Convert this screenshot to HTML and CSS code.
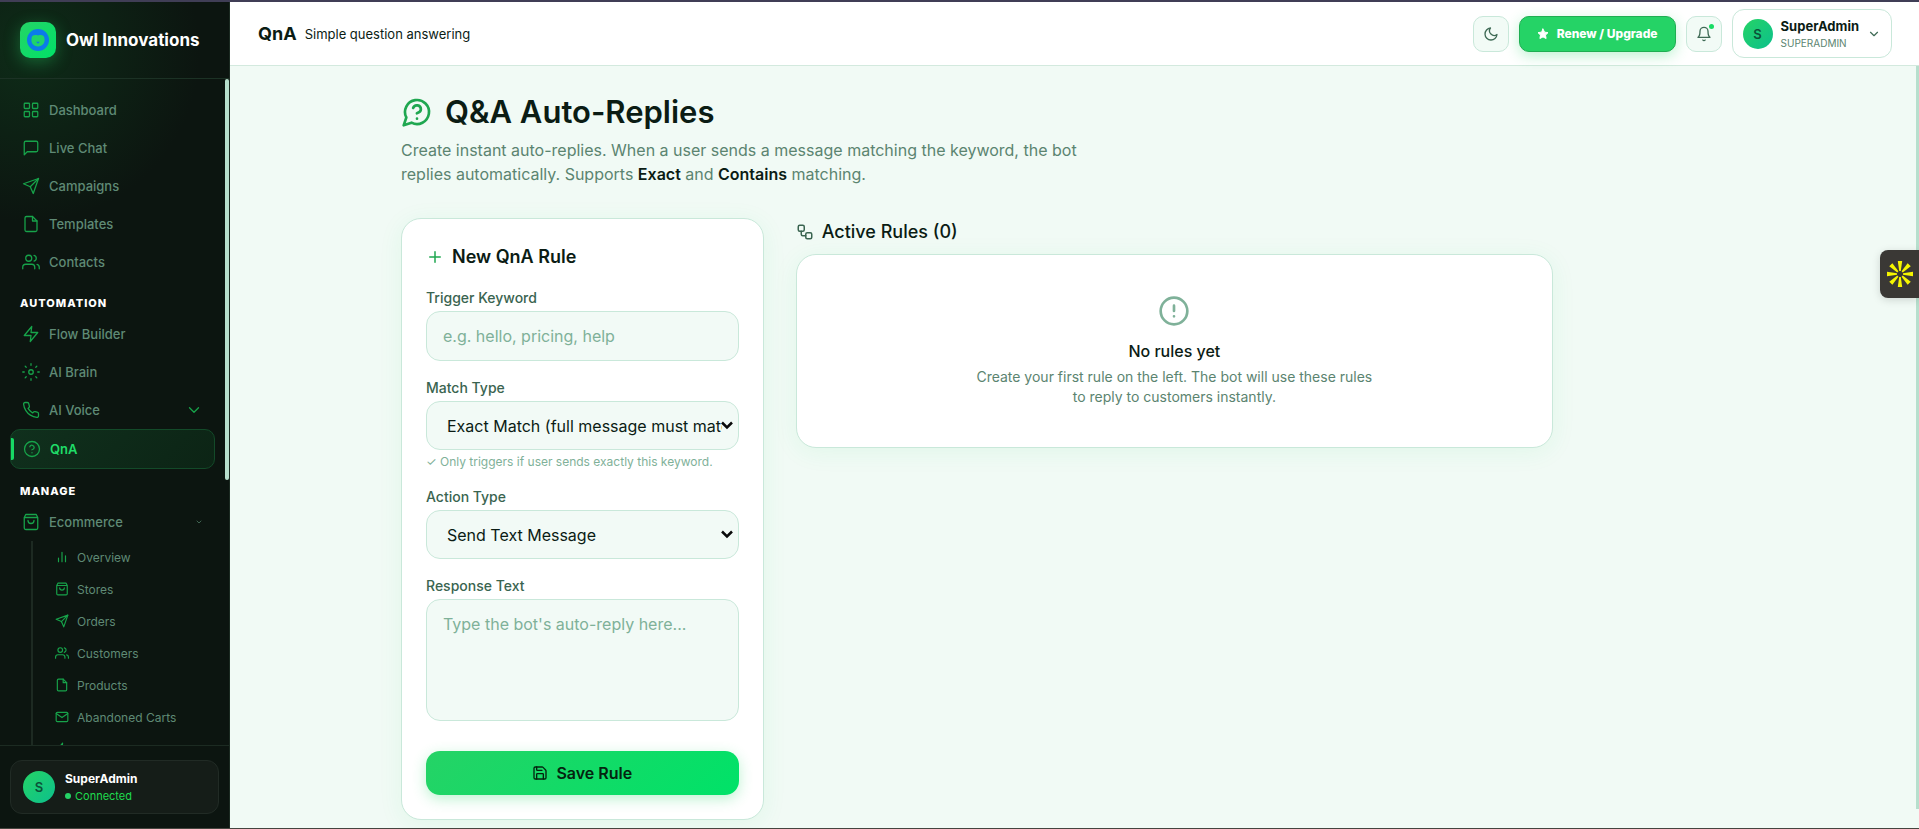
FILE: index.html
```
<!DOCTYPE html>
<html lang="en">
<head>
  <meta charset="UTF-8" />
  <meta name="viewport" content="width=device-width, initial-scale=1.0"/>
  <title>QnA - Owl Innovations</title>
  <link rel="stylesheet" href="styles.css">
</head>
<body>
  <!-- Icon set -->
  <svg class="sprite" aria-hidden="true">
    <symbol id="i-grid" viewBox="0 0 24 24"><rect x="3" y="3" width="7" height="7" rx="1"/><rect x="14" y="3" width="7" height="7" rx="1"/><rect x="14" y="14" width="7" height="7" rx="1"/><rect x="3" y="14" width="7" height="7" rx="1"/></symbol>
    <symbol id="i-chat" viewBox="0 0 24 24"><path d="M21 15a2 2 0 0 1-2 2H7l-4 4V5a2 2 0 0 1 2-2h14a2 2 0 0 1 2 2z"/></symbol>
    <symbol id="i-send" viewBox="0 0 24 24"><path d="M22 2 15 22l-4-9-9-4z"/><path d="M22 2 11 13"/></symbol>
    <symbol id="i-file" viewBox="0 0 24 24"><path d="M14 2H6a2 2 0 0 0-2 2v16a2 2 0 0 0 2 2h12a2 2 0 0 0 2-2V8z"/><path d="M14 2v6h6"/></symbol>
    <symbol id="i-users" viewBox="0 0 24 24"><path d="M17 21v-2a4 4 0 0 0-4-4H5a4 4 0 0 0-4 4v2"/><circle cx="9" cy="7" r="4"/><path d="M23 21v-2a4 4 0 0 0-3-3.87M16 3.13a4 4 0 0 1 0 7.75"/></symbol>
    <symbol id="i-bolt" viewBox="0 0 24 24"><path d="M13 2 3 14h9l-1 8 10-12h-9z"/></symbol>
    <symbol id="i-sun" viewBox="0 0 24 24"><circle cx="12" cy="12" r="3"/><path d="M12 1v2M12 21v2M4.200 4.200l1.400 1.400M18.400 18.400l1.400 1.400M1 12h2M21 12h2M4.200 19.800l1.400-1.400M18.400 5.600l1.400-1.400"/></symbol>
    <symbol id="i-phone" viewBox="0 0 24 24"><path d="M22 16.92v3a2 2 0 0 1-2.18 2 19.79 19.79 0 0 1-8.63-3.07 19.5 19.5 0 0 1-6-6 19.79 19.79 0 0 1-3.07-8.67A2 2 0 0 1 4.11 2h3a2 2 0 0 1 2 1.72c.13.96.36 1.9.7 2.81a2 2 0 0 1-.45 2.11L8.09 9.91a16 16 0 0 0 6 6l1.27-1.27a2 2 0 0 1 2.11-.45c.91.34 1.85.57 2.81.7A2 2 0 0 1 22 16.92z"/></symbol>
    <symbol id="i-help" viewBox="0 0 24 24"><circle cx="12" cy="12" r="10"/><path d="M9.09 9a3 3 0 0 1 5.83 1c0 2-3 3-3 3M12 17h.01"/></symbol>
    <symbol id="i-bag" viewBox="0 0 24 24"><path d="M5 2h14l2 4v14a2 2 0 0 1-2 2H5a2 2 0 0 1-2-2V6zM3 6h18M16 10a4 4 0 0 1-8 0"/></symbol>
    <symbol id="i-bars" viewBox="0 0 24 24"><path d="M18 20V10M12 20V4M6 20v-6"/></symbol>
    <symbol id="i-mail" viewBox="0 0 24 24"><rect x="2" y="4" width="20" height="16" rx="2"/><path d="m22 6-10 7L2 6"/></symbol>
    <symbol id="i-down" viewBox="0 0 24 24"><path d="m6 9 6 6 6-6"/></symbol>
    <symbol id="i-moon" viewBox="0 0 24 24"><path d="M21 12.79A9 9 0 1 1 11.21 3 7 7 0 0 0 21 12.79z"/></symbol>
    <symbol id="i-bell" viewBox="0 0 24 24"><path d="M18 8A6 6 0 0 0 6 8c0 7-3 9-3 9h18s-3-2-3-9M13.73 21a2 2 0 0 1-3.46 0"/></symbol>
    <symbol id="i-star" viewBox="0 0 24 24"><path d="m12 2 3.1 6.3 6.9 1-5 4.9 1.2 6.8-6.2-3.2L5.8 21 7 14.2 2 9.3l6.9-1z"/></symbol>
    <symbol id="i-bubble" viewBox="0 0 24 24"><path d="M7.9 20A9 9 0 1 0 4 16.1L2 22z"/><path d="M9.09 9a3 3 0 0 1 5.83 1c0 2-3 3-3 3M12 17h.01"/></symbol>
    <symbol id="i-plus" viewBox="0 0 24 24"><path d="M5 12h14M12 5v14"/></symbol>
    <symbol id="i-save" viewBox="0 0 24 24"><path d="M15.2 3a2 2 0 0 1 1.4.6l3.8 3.8a2 2 0 0 1 .6 1.4V19a2 2 0 0 1-2 2H5a2 2 0 0 1-2-2V5a2 2 0 0 1 2-2z"/><path d="M17 21v-7a1 1 0 0 0-1-1H8a1 1 0 0 0-1 1v7M7 3v4a1 1 0 0 0 1 1h7"/></symbol>
    <symbol id="i-flow" viewBox="0 0 24 24"><rect x="3" y="3" width="8" height="8" rx="2"/><path d="M7 11v4a2 2 0 0 0 2 2h4"/><rect x="13" y="13" width="8" height="8" rx="2"/></symbol>
    <symbol id="i-alert" viewBox="0 0 24 24"><circle cx="12" cy="12" r="10"/><path d="M12 8v4M12 16h.01"/></symbol>
  </svg>

  <div class="app">
    <aside class="sidebar">
      <div class="brand">
        <span class="brand-logo">
          <svg viewBox="0 0 24 24" aria-hidden="true"><circle cx="12" cy="12" r="12" fill="#0b7bea"/><path d="M5 10c0-3 3-4 7-3 4-1 7 0 7 3 1 5-2 9-7 9s-8-4-7-9z" fill="#1fd46a"/><path d="M10 14h4l-2 2z" fill="#0b7bea"/></svg>
        </span>
        <span class="brand-name">Owl Innovations</span>
      </div>

      <nav class="nav">
        <a class="nav-item" href="#"><svg class="icon"><use href="#i-grid"/></svg>Dashboard</a>
        <a class="nav-item" href="#"><svg class="icon"><use href="#i-chat"/></svg>Live Chat</a>
        <a class="nav-item" href="#"><svg class="icon"><use href="#i-send"/></svg>Campaigns</a>
        <a class="nav-item" href="#"><svg class="icon"><use href="#i-file"/></svg>Templates</a>
        <a class="nav-item" href="#"><svg class="icon"><use href="#i-users"/></svg>Contacts</a>

        <div class="nav-label">Automation</div>
        <a class="nav-item" href="#"><svg class="icon"><use href="#i-bolt"/></svg>Flow Builder</a>
        <a class="nav-item" href="#"><svg class="icon"><use href="#i-sun"/></svg>AI Brain</a>
        <a class="nav-item" href="#"><svg class="icon"><use href="#i-phone"/></svg>AI Voice<svg class="icon caret"><use href="#i-down"/></svg></a>
        <a class="nav-item active" href="#"><svg class="icon"><use href="#i-help"/></svg>QnA</a>

        <div class="nav-label">Manage</div>
        <a class="nav-item" href="#"><svg class="icon"><use href="#i-bag"/></svg>Ecommerce<svg class="icon caret small"><use href="#i-down"/></svg></a>
        <div class="subnav">
          <a href="#"><svg class="icon"><use href="#i-bars"/></svg>Overview</a>
          <a href="#"><svg class="icon"><use href="#i-bag"/></svg>Stores</a>
          <a href="#"><svg class="icon"><use href="#i-send"/></svg>Orders</a>
          <a href="#"><svg class="icon"><use href="#i-users"/></svg>Customers</a>
          <a href="#"><svg class="icon"><use href="#i-file"/></svg>Products</a>
          <a href="#"><svg class="icon"><use href="#i-mail"/></svg>Abandoned Carts</a>
          <a href="#" aria-label="Automations"><svg class="icon"><use href="#i-bolt"/></svg></a>
        </div>
      </nav>

      <div class="sidebar-footer">
        <div class="user-card">
          <span class="avatar">S</span>
          <div>
            <div class="user-name">SuperAdmin</div>
            <div class="user-status">Connected</div>
          </div>
        </div>
      </div>
    </aside>

    <div class="content">
      <header class="topbar">
        <div class="topbar-title">QnA</div>
        <div class="topbar-sub">Simple question answering</div>
        <div class="topbar-actions">
          <button class="icon-btn" type="button" aria-label="Dark mode"><svg class="icon"><use href="#i-moon"/></svg></button>
          <button class="upgrade-btn" type="button"><svg class="icon"><use href="#i-star"/></svg>Renew / Upgrade</button>
          <button class="icon-btn" type="button" aria-label="Notifications"><svg class="icon"><use href="#i-bell"/></svg><span class="dot"></span></button>
          <button class="profile-btn" type="button">
            <span class="avatar">S</span>
            <span class="profile-text">
              <span class="profile-name">SuperAdmin</span>
              <span class="profile-role">SUPERADMIN</span>
            </span>
            <svg class="icon"><use href="#i-down"/></svg>
          </button>
        </div>
      </header>

      <main class="main">
        <div class="page">
          <div class="page-inner">
            <h1><svg class="icon"><use href="#i-bubble"/></svg>Q&amp;A Auto-Replies</h1>
            <p class="lead">Create instant auto-replies. When a user sends a message matching the keyword, the bot replies automatically. Supports <strong>Exact</strong> and <strong>Contains</strong> matching.</p>

            <div class="columns">
              <form class="card rule-form">
                <h2><svg class="icon"><use href="#i-plus"/></svg>New QnA Rule</h2>

                <div class="field">
                  <label for="keyword">Trigger Keyword</label>
                  <input id="keyword" type="text" placeholder="e.g. hello, pricing, help">
                </div>

                <div class="field">
                  <label for="match">Match Type</label>
                  <div class="select-wrap">
                    <select id="match">
                      <option>Exact Match (full message must match)</option>
                      <option>Contains</option>
                    </select>
                    <svg class="icon"><use href="#i-down"/></svg>
                  </div>
                  <p class="hint">✓ Only triggers if user sends exactly this keyword.</p>
                </div>

                <div class="field">
                  <label for="action">Action Type</label>
                  <div class="select-wrap">
                    <select id="action">
                      <option>Send Text Message</option>
                    </select>
                    <svg class="icon"><use href="#i-down"/></svg>
                  </div>
                </div>

                <div class="field">
                  <label for="response">Response Text</label>
                  <textarea id="response" placeholder="Type the bot's auto-reply here..."></textarea>
                </div>

                <button class="save-btn" type="button"><svg class="icon"><use href="#i-save"/></svg>Save Rule</button>
              </form>

              <section class="rules">
                <h2><svg class="icon"><use href="#i-flow"/></svg>Active Rules (0)</h2>
                <div class="card empty">
                  <svg class="icon"><use href="#i-alert"/></svg>
                  <h3>No rules yet</h3>
                  <p>Create your first rule on the left. The bot will use these rules to reply to customers instantly.</p>
                </div>
              </section>
            </div>
          </div>
        </div>
      </main>
    </div>
  </div>

  <button class="floating" type="button" aria-label="Open widget">
    <svg viewBox="-14 -14 28 28" fill="#f5f500">
      <path id="ray" d="M-.8-3-2.200-13H2.200L.8-3z"/>
      <use href="#ray" transform="rotate(45)"/>
      <use href="#ray" transform="rotate(90)"/>
      <use href="#ray" transform="rotate(135)"/>
      <use href="#ray" transform="rotate(180)"/>
      <use href="#ray" transform="rotate(225)"/>
      <use href="#ray" transform="rotate(270)"/>
      <use href="#ray" transform="rotate(315)"/>
    </svg>
  </button>
</body>
</html>
```
FILE: styles.css
```
:root {
  --green: #25d366;
  --green-bright: #00e268;
  --green-dark: #1fa750;
  --side-bg: #0c1510;
  --side-text: #5f8a75;
  --side-icon: #17a34a;
  --page-bg: #f1faf5;
  --border: #c9e8da;
  --text: #0b1c14;
  --text-mid: #3a6450;
  --text-soft: #5b8470;
  --placeholder: #7fb199;
  --scroll: #b7dfcd;
}

* {
  box-sizing: border-box;
}

body {
  margin: 0;
  font-family: Inter, "Noto Sans", sans-serif;
  color: var(--text);
  background: var(--page-bg);
}

button, input, select, textarea {
  font-family: inherit;
}

a {
  text-decoration: none;
}

h1, h2, h3, p {
  margin: 0;
}

.sprite {
  position: absolute;
  width: 0;
  height: 0;
}

.icon {
  width: 16px;
  height: 16px;
  flex-shrink: 0;
  fill: none;
  stroke: currentColor;
  stroke-width: 2;
  stroke-linecap: round;
  stroke-linejoin: round;
}

.app {
  display: flex;
  height: 100vh;
  border-top: 2px solid #403e56;
  border-bottom: 1px solid #45453f;
}

/* Sidebar */
.sidebar {
  position: relative;
  width: 230px;
  flex-shrink: 0;
  display: flex;
  flex-direction: column;
  background: radial-gradient(circle at 30px 50px, #0e2c18 0, transparent 170px), var(--side-bg);
  border-right: 1px solid #1b2a21;
}

.brand {
  display: flex;
  align-items: center;
  gap: 10px;
  height: 77px;
  padding: 0 20px;
  border-bottom: 1px solid #1c3225;
  flex-shrink: 0;
}

.brand-logo {
  display: flex;
  align-items: center;
  justify-content: center;
  width: 36px;
  height: 36px;
  border-radius: 10px;
  background: linear-gradient(135deg, var(--green), var(--green-bright));
  box-shadow: 0 4px 16px rgba(37, 211, 102, 0.35);
}

.brand-logo svg {
  width: 22px;
  height: 22px;
}

.brand-name {
  color: #fff;
  font-size: 17px;
  font-weight: 700;
  white-space: nowrap;
}

.nav {
  position: relative;
  flex: 1;
  min-height: 0;
  overflow: hidden;
  padding: 12px 14px 0 10px;
}

.nav::after {
  content: "";
  position: absolute;
  top: 0;
  right: 0;
  width: 4px;
  height: 401px;
  border-radius: 2px;
  background: var(--scroll);
}

.nav-item {
  position: relative;
  display: flex;
  align-items: center;
  gap: 9px;
  height: 38px;
  padding: 0 12px;
  color: var(--side-text);
  font-size: 13px;
  font-weight: 500;
}

.nav-item .icon, .subnav .icon {
  color: var(--side-icon);
}

.nav-item .icon {
  width: 18px;
  height: 18px;
  stroke-width: 1.7;
}

.nav-item .caret {
  margin-left: auto;
}

.nav-item .caret.small {
  width: 8px;
  height: 8px;
  color: #3f6351;
  stroke-width: 3;
}

.nav-item.active {
  height: 40px;
  color: #1fdc68;
  font-weight: 600;
  border: 1px solid #134a29;
  border-radius: 10px;
  background: linear-gradient(135deg, #10301d, #0c2415);
}

.nav-item.active::before {
  content: "";
  position: absolute;
  left: 0;
  top: 8px;
  width: 3px;
  height: 22px;
  border-radius: 0 2px 2px 0;
  background: #17d964;
}

.nav-label {
  padding: 16px 10px 6px;
  color: #fff;
  font-size: 11px;
  line-height: 12px;
  font-weight: 800;
  letter-spacing: 1px;
  text-transform: uppercase;
}

.subnav {
  margin-left: 21px;
  border-left: 2px solid #1d2a22;
}

.subnav a {
  display: flex;
  align-items: center;
  gap: 8px;
  height: 32px;
  padding-left: 22px;
  color: var(--side-text);
  font-size: 12px;
}

.subnav .icon {
  width: 14px;
  height: 14px;
}

.sidebar-footer {
  flex-shrink: 0;
  padding: 14px 10px;
  border-top: 1px solid #1c2b22;
}

.user-card {
  display: flex;
  align-items: center;
  gap: 10px;
  height: 54px;
  padding: 0 12px;
  border: 1px solid #212b25;
  border-radius: 12px;
  background: #151d18;
}

.avatar {
  display: flex;
  align-items: center;
  justify-content: center;
  width: 32px;
  height: 32px;
  flex-shrink: 0;
  border-radius: 50%;
  background: linear-gradient(135deg, var(--green), #0cc08c);
  color: #0b5138;
  font-size: 13px;
  font-weight: 600;
}

.user-name {
  color: #fff;
  font-size: 12px;
  line-height: 18px;
  font-weight: 700;
}

.user-status {
  display: flex;
  align-items: center;
  gap: 4px;
  color: #1fdc4f;
  font-size: 11px;
  line-height: 16px;
}

.user-status::before {
  content: "";
  width: 6px;
  height: 6px;
  border-radius: 50%;
  background: var(--green);
}

/* Top bar */
.content {
  flex: 1;
  min-width: 0;
  display: flex;
  flex-direction: column;
}

.topbar {
  display: flex;
  align-items: center;
  gap: 8px;
  height: 64px;
  padding: 0 27px 0 28px;
  flex-shrink: 0;
  background: #fff;
  border-bottom: 1px solid #d3e9de;
}

.topbar-title {
  font-size: 18px;
  font-weight: 700;
}

.topbar-sub {
  font-size: 13px;
  line-height: 20px;
}

.topbar-actions {
  display: flex;
  align-items: center;
  gap: 10px;
  margin-left: auto;
}

.icon-btn {
  position: relative;
  display: flex;
  align-items: center;
  justify-content: center;
  width: 36px;
  height: 36px;
  padding: 0;
  border: 1px solid var(--border);
  border-radius: 10px;
  background: #f2fbf6;
  color: #3f6b56;
  cursor: pointer;
}

.dot {
  position: absolute;
  top: 7px;
  right: 7px;
  width: 5px;
  height: 5px;
  border-radius: 50%;
  background: #18dc64;
}

.upgrade-btn {
  display: flex;
  align-items: center;
  justify-content: center;
  gap: 8px;
  width: 157px;
  height: 36px;
  padding: 0;
  border: 1px solid #1fae52;
  border-radius: 10px;
  background: var(--green);
  box-shadow: 0 4px 14px rgba(37, 211, 102, 0.3);
  color: #fff;
  font-size: 12px;
  font-weight: 800;
  cursor: pointer;
}

.upgrade-btn .icon {
  width: 12px;
  height: 12px;
  fill: currentColor;
}

.profile-btn {
  display: flex;
  align-items: center;
  gap: 8px;
  height: 49px;
  padding: 0 10px;
  border: 1px solid var(--border);
  border-radius: 12px;
  background: #fff;
  color: var(--text);
  text-align: left;
  cursor: pointer;
}

.profile-btn .avatar {
  width: 30px;
  height: 30px;
}

.profile-btn .icon {
  width: 14px;
  height: 14px;
  color: #3f6b56;
}

.profile-text {
  display: flex;
  flex-direction: column;
}

.profile-name {
  font-size: 13px;
  line-height: 18px;
  font-weight: 700;
}

.profile-role {
  color: var(--text-soft);
  font-size: 10px;
  line-height: 16px;
}

/* Page */
.main {
  position: relative;
  flex: 1;
  min-height: 0;
  overflow: hidden;
}

.main::after {
  content: "";
  position: absolute;
  top: 0;
  right: 0;
  width: 3px;
  height: calc(100% - 19px);
  background: var(--scroll);
}

.page {
  max-width: 1494px;
  padding: 26px 24px;
}

.page-inner {
  max-width: 1152px;
  margin: 0 auto;
}

h1 {
  display: flex;
  align-items: center;
  gap: 12px;
  font-size: 31px;
  line-height: 40px;
  font-weight: 600;
}

h1 .icon {
  width: 32px;
  height: 32px;
  color: var(--green-dark);
}

.lead {
  max-width: 680px;
  margin-top: 6px;
  color: var(--text-soft);
  font-size: 16px;
  line-height: 24px;
}

.lead strong {
  color: var(--text);
  font-weight: 600;
}

.columns {
  display: grid;
  grid-template-columns: repeat(12, 1fr);
  gap: 32px;
  margin-top: 32px;
  align-items: start;
}

.card {
  border: 1px solid var(--border);
  border-radius: 20px;
  background: #fff;
  box-shadow: 0 4px 24px rgba(37, 211, 102, 0.08);
}

.rule-form {
  grid-column: span 4;
  padding: 24px;
}

h2 {
  display: flex;
  align-items: center;
  gap: 8px;
  font-size: 18px;
  line-height: 28px;
  font-weight: 600;
}

.rule-form h2 .icon {
  width: 18px;
  height: 18px;
  color: var(--green-dark);
}

.field {
  margin-top: 16px;
}

label {
  display: block;
  margin-bottom: 2px;
  color: var(--text-mid);
  font-size: 14px;
  line-height: 22px;
  font-weight: 500;
}

input, select, textarea {
  display: block;
  width: 100%;
  height: 50px;
  padding: 0 16px;
  border: 1px solid var(--border);
  border-radius: 14px;
  background-color: #f2faf6;
  color: var(--text);
  font-size: 16px;
}

textarea {
  height: 122px;
  padding: 12px 16px;
  line-height: 24px;
  resize: none;
}

.select-wrap {
  position: relative;
}

select {
  height: 49px;
  padding: 0 16px 0 20px;
  appearance: none;
}

/* chevron lies over the end of the option text */
.select-wrap .icon {
  position: absolute;
  top: 14px;
  right: 2px;
  width: 20px;
  height: 20px;
  color: #0a0a0a;
  stroke-width: 3;
  stroke-linecap: butt;
  stroke-linejoin: miter;
  pointer-events: none;
}

::placeholder {
  color: var(--placeholder);
  opacity: 1;
}

.hint {
  margin-top: 4px;
  color: var(--placeholder);
  font-size: 12px;
  line-height: 16px;
  white-space: nowrap;
}

.save-btn {
  display: flex;
  align-items: center;
  justify-content: center;
  gap: 8px;
  width: 100%;
  height: 44px;
  margin-top: 30px;
  border: 0;
  border-radius: 14px;
  background: linear-gradient(135deg, var(--green), var(--green-bright));
  box-shadow: 0 4px 14px rgba(37, 211, 102, 0.3);
  color: #04240f;
  font-size: 16px;
  font-weight: 600;
  cursor: pointer;
}

.rules {
  grid-column: span 8;
}

.rules h2 {
  margin-bottom: 8px;
  font-weight: 500;
}

.rules h2 .icon {
  width: 18px;
  height: 18px;
  color: var(--text-mid);
}

.empty {
  display: flex;
  flex-direction: column;
  align-items: center;
  padding: 40px 24px;
  text-align: center;
}

.empty .icon {
  width: 32px;
  height: 32px;
  color: var(--placeholder);
}

.empty h3 {
  margin-top: 12px;
  font-size: 16px;
  line-height: 24px;
  font-weight: 500;
}

.empty p {
  max-width: 400px;
  margin-top: 4px;
  color: var(--text-soft);
  font-size: 14px;
  line-height: 20px;
}

/* Floating widget tab on the right edge */
.floating {
  position: fixed;
  top: 250px;
  right: 0;
  display: flex;
  align-items: center;
  justify-content: center;
  width: 39px;
  height: 48px;
  padding: 0;
  border: 0;
  border-radius: 8px 0 0 8px;
  background: #3a3835;
  box-shadow: 0 2px 8px rgba(0, 0, 0, 0.15);
  cursor: pointer;
}

.floating svg {
  width: 28px;
  height: 28px;
}
```
